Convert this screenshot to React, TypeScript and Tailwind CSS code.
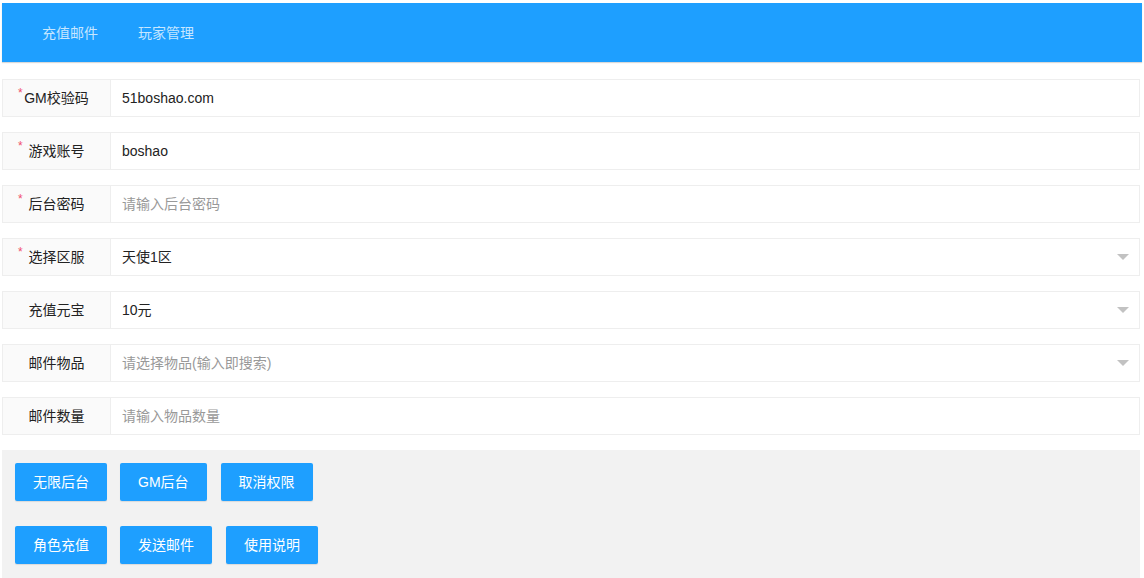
import React from "react";

type Row = {
  label: string;
  required?: boolean;
  value?: string;
  placeholder?: string;
  select?: boolean;
};

const rows: Row[] = [
  { label: "GM校验码", required: true, value: "51boshao.com" },
  { label: "游戏账号", required: true, value: "boshao" },
  { label: "后台密码", required: true, placeholder: "请输入后台密码" },
  { label: "选择区服", required: true, value: "天使1区", select: true },
  { label: "充值元宝", value: "10元", select: true },
  { label: "邮件物品", placeholder: "请选择物品(输入即搜索)", select: true },
  { label: "邮件数量", placeholder: "请输入物品数量" },
];

const buttonRows = [
  ["无限后台", "GM后台", "取消权限"],
  ["角色充值", "发送邮件", "使用说明"],
];

export default function App() {
  return (
    <div
      className="min-h-[578px] bg-white px-[2px] pt-[3px] text-[14px] text-[#333]"
      style={{ fontFamily: '"Liberation Sans", "Noto Sans CJK SC", sans-serif' }}
    >
      {/* top nav */}
      <div className="flex h-[59px] items-center bg-[#1E9FFF] pl-[20px] pt-[2px] shadow-[0_1px_1px_rgba(0,0,0,0.15)]">
        {["充值邮件", "玩家管理"].map((item) => (
          <span key={item} className="px-[20px] text-white/75">
            {item}
          </span>
        ))}
      </div>

      {/* form rows */}
      <div className="mr-[2px] mt-[17px] flex flex-col gap-[15px]">
        {rows.map((row) => (
          <div key={row.label} className="flex h-[38px]">
            <div className="relative flex w-[109px] shrink-0 items-center justify-center border border-[#eee] bg-[#FAFAFA] text-[#222]">
              {row.required && (
                <span className="absolute left-[15px] top-[4px] text-[12px] text-[#F0506E]">*</span>
              )}
              <span>{row.label}</span>
            </div>
            <div className="relative flex flex-1 items-center border border-l-0 border-[#eee] bg-white pl-[11px]">
              {row.value ? (
                <span className="text-[#222]">{row.value}</span>
              ) : (
                <span className="text-[#999]">{row.placeholder}</span>
              )}
              {row.select && (
                <span className="absolute right-[10px] top-1/2 mt-[-3px] h-0 w-0 border-x-[6px] border-t-[6px] border-x-transparent border-t-[#c2c2c2]" />
              )}
            </div>
          </div>
        ))}
      </div>

      {/* actions */}
      <div className="mr-[2px] mt-[15px] flex h-[128px] flex-col gap-[25px] bg-[#f2f2f2] px-[13px] pt-[13px]">
        {buttonRows.map((line, i) => (
          <div key={i} className="flex gap-[13px]">
            {line.map((b, j) => (
              <button
                key={b}
                className={
                  "h-[38px] rounded-[2px] bg-[#1E9FFF] px-[18px] text-[14px] text-white shadow-[0_1px_1px_rgba(0,0,0,0.1)]" +
                  (j === 2 ? " ml-[1px]" : "")
                }
              >
                {b}
              </button>
            ))}
          </div>
        ))}
      </div>
    </div>
  );
}
